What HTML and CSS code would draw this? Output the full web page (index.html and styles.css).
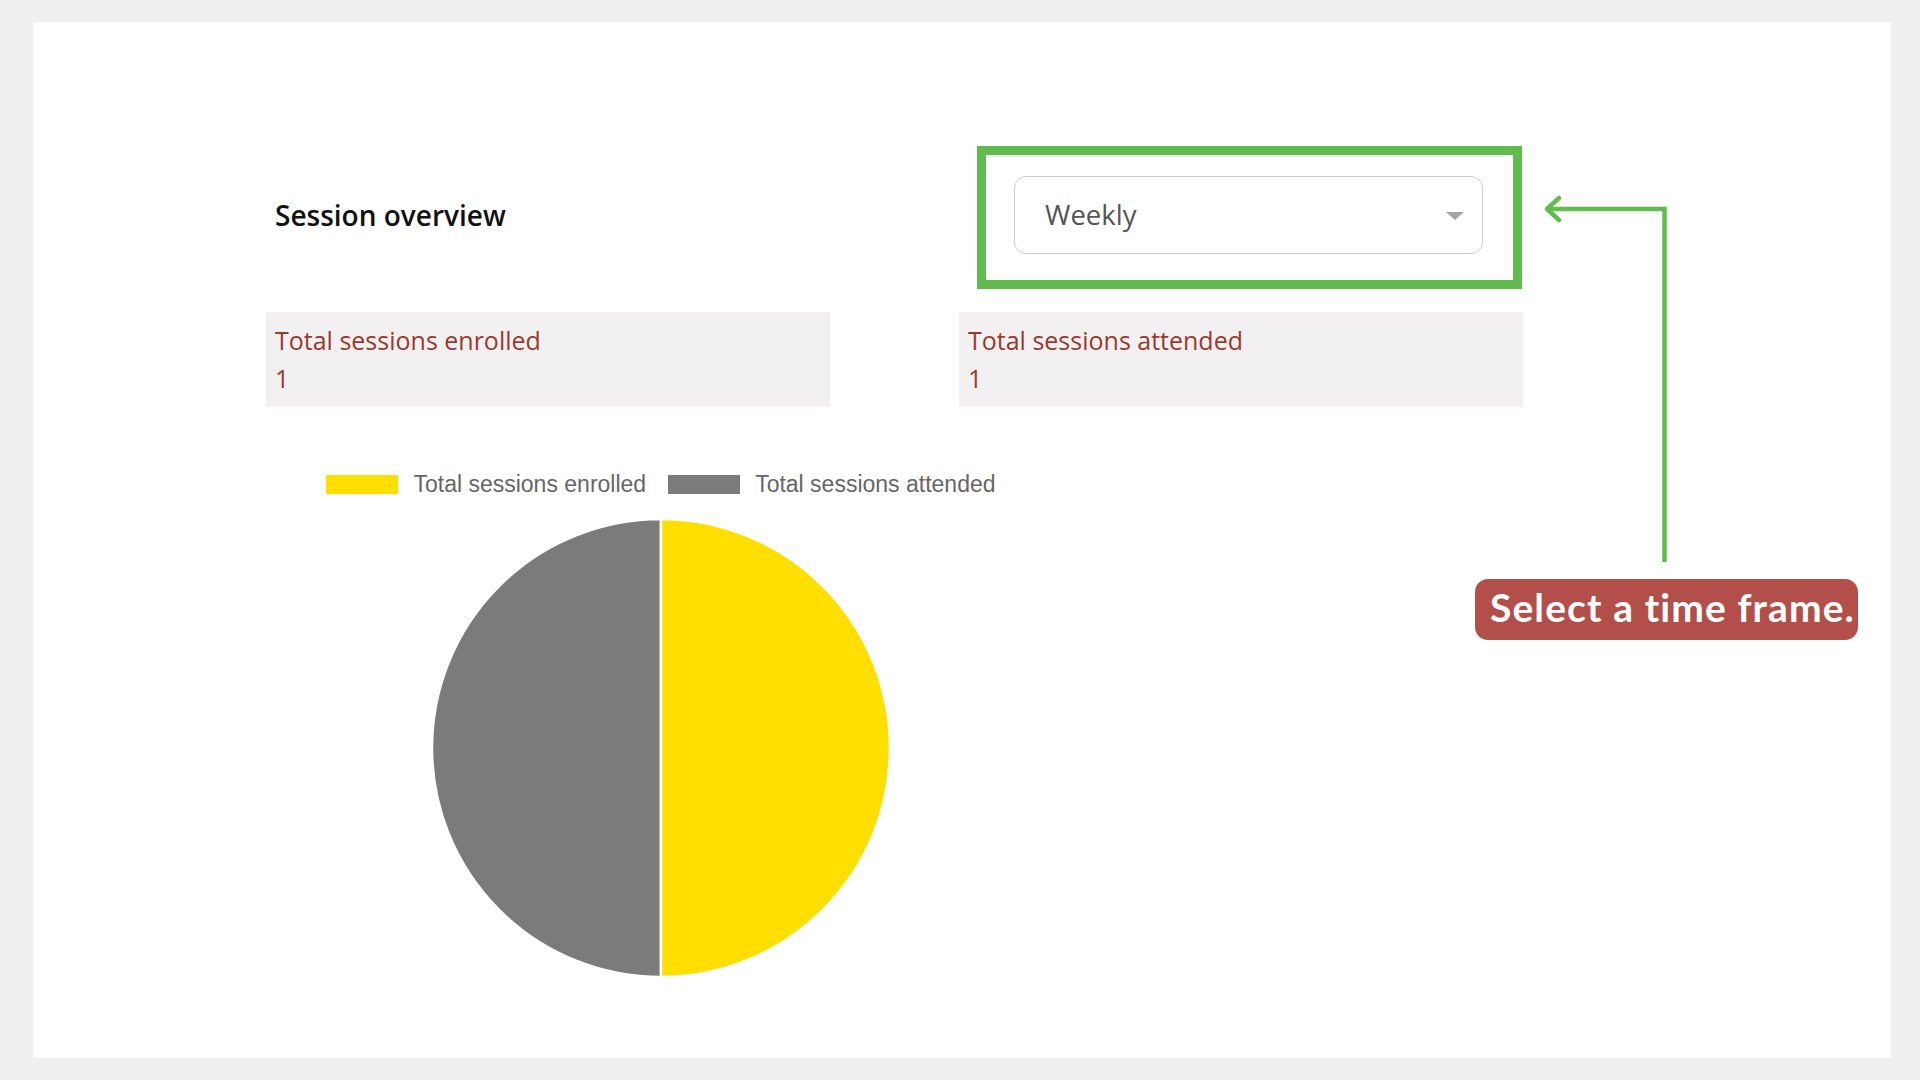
FILE: index.html
```html
<!DOCTYPE html>
<html lang="en">
<head>
<meta charset="utf-8">
<title>Session overview</title>
<link rel="stylesheet" href="styles.css">
</head>
<body>
<div class="card">
  <div class="content">
    <div class="header-row">
      <div class="col">
        <h2 class="title">Session overview</h2>
      </div>
      <div class="col col-select">
        <div class="select-wrap">
          <div class="select">
            <span class="select-value">Weekly</span>
            <span class="caret"></span>
          </div>
          <div class="highlight"></div>
        </div>
      </div>
    </div>

    <div class="stats-row">
      <div class="stat">
        <div class="stat-label">Total sessions enrolled</div>
        <div class="stat-value">1</div>
      </div>
      <div class="stat">
        <div class="stat-label">Total sessions attended</div>
        <div class="stat-value">1</div>
      </div>
    </div>

    <div class="chart">
      <div class="legend">
        <div class="legend-item"><span class="swatch swatch-yellow"></span><span class="legend-text">Total sessions enrolled</span></div>
        <div class="legend-item"><span class="swatch swatch-gray"></span><span class="legend-text">Total sessions attended</span></div>
      </div>
      <svg class="pie" width="458" height="458" viewBox="0 0 458 458">
        <path d="M229 0 A229 229 0 0 0 229 458 Z" fill="#7b7b7b" stroke="#ffffff" stroke-width="2.5"/>
        <path d="M229 0 A229 229 0 0 1 229 458 Z" fill="#ffdf00" stroke="#ffffff" stroke-width="2.5"/>
      </svg>
    </div>
  </div>

  <svg class="connector" width="160" height="390" viewBox="0 0 160 390">
    <polyline points="14,17 131.5,17 131.5,370" fill="none" stroke="#62bb4f" stroke-width="4.5"/>
    <polyline points="26,6 14,17 26,28" fill="none" stroke="#62bb4f" stroke-width="4.5" stroke-linecap="round" stroke-linejoin="round"/>
  </svg>
  <div class="callout">Select a time frame.</div>
</div>
</body>
</html>
```

FILE: styles.css
```css
html, body {
  margin: 0;
  padding: 0;
}

body {
  background: #efefef;
  font-family: "Open Sans", "Noto Sans", sans-serif;
}

.card {
  position: relative;
  margin: 22px 29px 22px 33px;
  height: 1036px;
  background: #ffffff;
}

.content {
  padding-left: 233px;
  padding-top: 154px;
  width: 1257px;
}

.header-row {
  display: flex;
  align-items: center;
  gap: 129px;
  height: 78px;
}

.col {
  width: 564px;
  flex: none;
}

.title {
  margin: 0;
  padding-left: 9px;
  font-size: 28px;
  font-weight: 600;
  color: #111111;
  line-height: 38px;
}

.col-select {
  display: flex;
  padding-left: 55px;
  box-sizing: border-box;
}

.select-wrap {
  position: relative;
  width: 469px;
}

.select {
  display: flex;
  align-items: center;
  justify-content: space-between;
  height: 78px;
  box-sizing: border-box;
  border: 1px solid #cccccc;
  border-radius: 12px;
  padding: 0 18px 0 30px;
  background: #ffffff;
}

.select-value {
  font-size: 27.5px;
  color: #555555;
  line-height: 38px;
}

.caret {
  width: 0;
  height: 0;
  border-left: 9px solid transparent;
  border-right: 9px solid transparent;
  border-top: 8px solid #a3a3a3;
  margin-top: 2px;
}

.highlight {
  position: absolute;
  top: -30px;
  left: -37px;
  right: -39px;
  bottom: -35px;
  border: 9.5px solid #62bb4f;
  pointer-events: none;
}

.stats-row {
  display: flex;
  gap: 129px;
  margin-top: 58px;
}

.stat {
  width: 564px;
  box-sizing: border-box;
  background: #f2f0f1;
  padding: 9px 8px 10px 9px;
  color: #9a3a2f;
  font-size: 25px;
  line-height: 38px;
}

.chart {
  width: 790px;
  display: flex;
  flex-direction: column;
  align-items: center;
  margin-top: 68px;
}

.legend {
  display: flex;
  align-items: center;
  gap: 22px;
  height: 19px;
}

.legend-item {
  display: flex;
  align-items: center;
  gap: 15px;
}

.swatch {
  display: block;
  width: 72px;
  height: 19px;
}

.swatch-yellow {
  background: #ffdf00;
}

.swatch-gray {
  background: #7b7b7b;
}

.legend-text {
  font-family: "Liberation Sans", Arial, sans-serif;
  font-size: 23px;
  color: #666666;
  line-height: 19px;
}

.pie {
  display: block;
  margin-top: 25px;
}

.connector {
  position: absolute;
  left: 1500px;
  top: 170px;
}

.callout {
  position: absolute;
  left: 1442px;
  top: 557px;
  width: 383px;
  height: 61px;
  box-sizing: border-box;
  padding: 5px 0 0 15px;
  background: #b34f4a;
  border-radius: 13px;
  color: #ffffff;
  font-family: Lato, "Open Sans", sans-serif;
  font-weight: 700;
  font-size: 39px;
  letter-spacing: 1.1px;
  line-height: 47px;
  white-space: nowrap;
}
```
